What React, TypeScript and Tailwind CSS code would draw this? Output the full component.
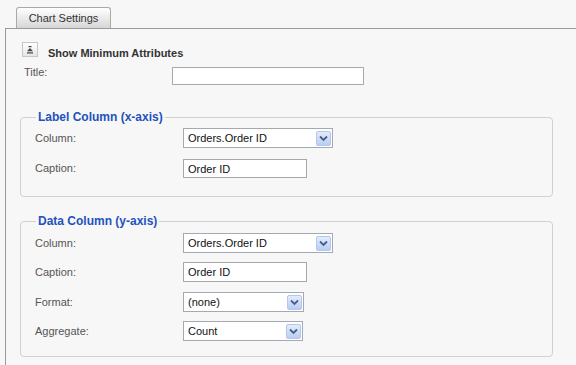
import React from "react";

function Arrow() {
  return (
    <div className="w-[15px] h-[15px] mr-[1px] border border-[#b4c6ea] rounded-[2px] bg-gradient-to-b from-[#e3ecfd] to-[#b9cdf3] flex items-center justify-center">
      <svg width="9" height="7" viewBox="0 0 9 7">
        <path d="M1 1.5 L4.5 5 L8 1.5" fill="none" stroke="#4a5f86" strokeWidth="1.8" />
      </svg>
    </div>
  );
}

function Select({ value, w }: { value: string; w: string }) {
  return (
    <div className={`${w} h-[20px] border border-[#a3aab3] bg-white flex items-center`}>
      <span className="flex-1 pl-[4px] text-[11px] text-[#111] leading-none">{value}</span>
      <Arrow />
    </div>
  );
}

function TextBox({ value, w, h }: { value: string; w: string; h: string }) {
  return (
    <input
      readOnly
      value={value}
      className={`${w} ${h} border border-[#a8a8a8] bg-white pl-[4px] text-[11px] text-[#111] outline-none font-['Liberation_Sans',Arial,sans-serif]`}
    />
  );
}

function Row({ label, children, mt }: { label: string; children: React.ReactNode; mt: string }) {
  return (
    <div className={`flex items-center ${mt}`}>
      <div className="w-[148px] text-[11px] text-[#555]">{label}</div>
      {children}
    </div>
  );
}

export default function App() {
  return (
    <div className="w-[576px] h-[365px] bg-[#f7f7f7] flex flex-col overflow-hidden font-['Liberation_Sans',Arial,sans-serif] text-[11px]">
      <div className="flex pl-[16px] pt-[7px]">
        <div className="h-[21px] w-[95px] border border-b-0 border-[#a9a9a9] rounded-t-[3px] bg-gradient-to-b from-white to-[#d6d6d6] flex justify-center pt-[4px] text-[#333] text-[11px] leading-[13px]">
          Chart Settings
        </div>
      </div>
      <div className="flex-1 ml-[5px] border-l border-t border-[#9a9a9a] flex flex-col">
        <div className="flex items-start ml-[16px] mt-[13px]">
          <div className="w-[16px] h-[15px] border border-[#c6c6c6] bg-gradient-to-b from-white to-[#e6e6e6] flex items-center justify-center">
            <svg width="10" height="10" viewBox="0 0 10 10">
              <rect x="3.5" y="1" width="3" height="1.2" fill="#444" />
              <path d="M5 3 L8 6.2 L2 6.2 Z" fill="#444" />
              <rect x="2" y="7.3" width="6" height="1.2" fill="#444" />
            </svg>
          </div>
          <div className="ml-[10px] mt-[5px] font-bold text-[#333] leading-[13px]">Show Minimum Attributes</div>
        </div>
        <div className="flex items-start ml-[18px] mt-[7px]">
          <div className="w-[148px] text-[#555] leading-[13px] mt-[-1px]">Title:</div>
          <TextBox value="" w="w-[192px]" h="h-[18px]" />
        </div>

        <fieldset className="ml-[14px] w-[533px] mt-[25px] border border-[#d2d2c6] rounded-[4px] pl-[14px] pt-[4px] pb-[18px]">
          <legend className="ml-[1px] px-[2px] text-[12px] font-bold text-[#1e52bd] leading-[14px]">Label Column (x-axis)</legend>
          <Row label="Column:" mt="">
            <Select value="Orders.Order ID" w="w-[150px]" />
          </Row>
          <Row label="Caption:" mt="mt-[11px]">
            <TextBox value="Order ID" w="w-[124px]" h="h-[19px]" />
          </Row>
        </fieldset>

        <fieldset className="ml-[14px] w-[533px] mt-[17px] border border-[#d2d2c6] rounded-[4px] pl-[14px] pt-[5px] pb-[15px]">
          <legend className="ml-[1px] px-[2px] text-[12px] font-bold text-[#1e52bd] leading-[14px]">Data Column (y-axis)</legend>
          <Row label="Column:" mt="">
            <Select value="Orders.Order ID" w="w-[150px]" />
          </Row>
          <Row label="Caption:" mt="mt-[9px]">
            <TextBox value="Order ID" w="w-[124px]" h="h-[20px]" />
          </Row>
          <Row label="Format:" mt="mt-[10px]">
            <Select value="(none)" w="w-[121px]" />
          </Row>
          <Row label="Aggregate:" mt="mt-[9px]">
            <Select value="Count" w="w-[120px]" />
          </Row>
        </fieldset>
      </div>
    </div>
  );
}
